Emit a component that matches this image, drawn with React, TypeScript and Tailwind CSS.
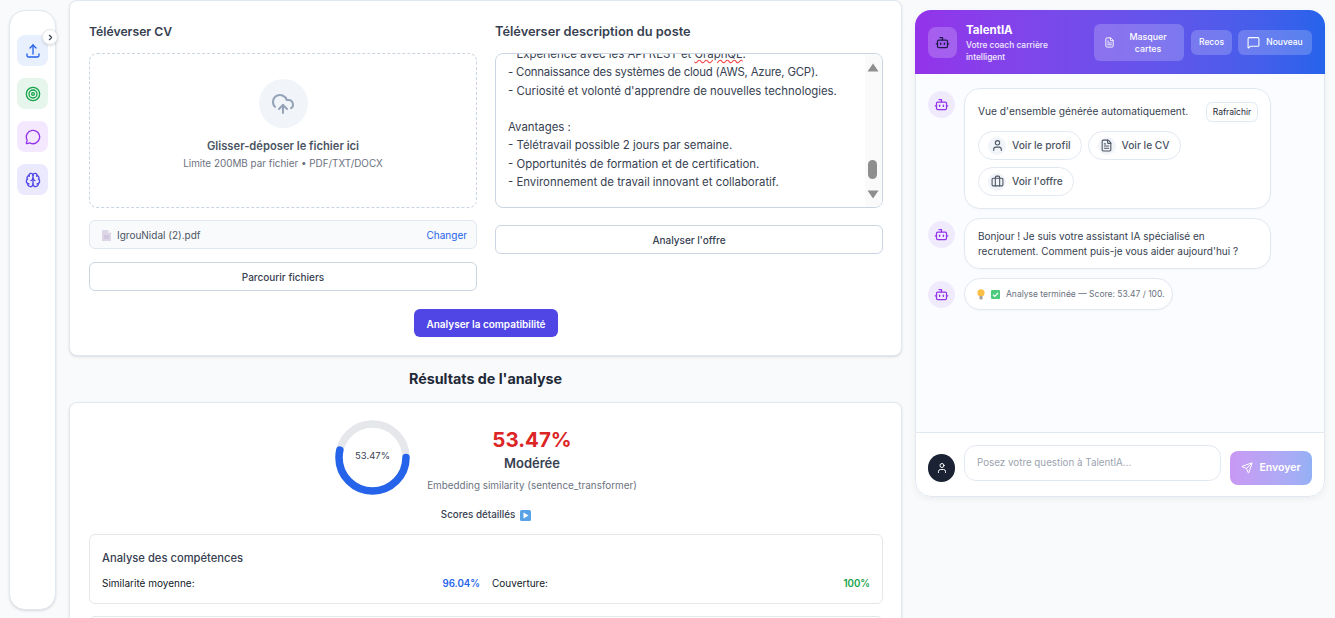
import React from 'react';
import {
    Bot,
    Brain,
    Briefcase,
    ChevronRight,
    CloudUpload,
    FileText,
    MessageCircle,
    MessageSquare,
    Send,
    Target,
    User,
} from 'lucide-react';

function UploadTray() {
    return (
        <svg width="16" height="16" viewBox="0 0 24 24" fill="none" stroke="currentColor" strokeWidth="2" strokeLinecap="round" strokeLinejoin="round">
            <path d="M3 16.5v2.25A2.25 2.25 0 0 0 5.25 21h13.5A2.25 2.25 0 0 0 21 18.75V16.5" />
            <path d="M7.5 7.5 12 3l4.5 4.5" />
            <path d="M12 3v13.5" />
        </svg>
    );
}

function PdfGlyph() {
    return (
        <svg width="9" height="11" viewBox="0 0 9 11">
            <path d="M0 0h6l3 3v8H0z" fill="#dcd6e6" />
            <path d="M6 0l3 3H6z" fill="#f1eef6" />
            <path d="M2 6h5M2 8h5" stroke="#c3bad2" strokeWidth="1" />
        </svg>
    );
}

function Bulb() {
    return (
        <svg width="8" height="11" viewBox="0 0 8 11">
            <circle cx="4" cy="3.8" r="3.6" fill="#fbbf47" />
            <rect x="2.4" y="7" width="3.2" height="3.4" rx="0.8" fill="#a8a29e" />
        </svg>
    );
}

function CheckBox() {
    return (
        <svg width="9" height="9" viewBox="0 0 9 9">
            <rect width="9" height="9" rx="1" fill="#4ccb7c" />
            <path d="M2 4.6l1.8 1.8L7 3" fill="none" stroke="#fff" strokeWidth="1.2" />
        </svg>
    );
}

function PlayBox() {
    return (
        <svg width="11" height="11" viewBox="0 0 11 11">
            <rect width="11" height="11" rx="1.5" fill="#5aa2e6" />
            <path d="M3.5 2.5v6l5-3z" fill="#fff" />
        </svg>
    );
}

function BotAvatar() {
    return (
        <div className="w-[27px] h-[27px] rounded-full bg-[#f0eafd] flex items-center justify-center shrink-0 text-[#9333ea]">
            <Bot size={15} />
        </div>
    );
}

function Chip({ icon, label }: { icon: React.ReactNode; label: string }) {
    return (
        <div className="h-[29px] flex items-center gap-[6px] pl-[9px] pr-[10px] rounded-full border border-[#e2e8f0] bg-white text-[10.2px] font-medium text-[#4b5563]">
            <span className="w-[18px] h-[18px] rounded-full bg-[#f1f5f9] flex items-center justify-center">{icon}</span>
            {label}
        </div>
    );
}

function Sidebar() {
    return (
        <aside className="relative w-[47px] h-[600px] mt-[10px] ml-[9px] shrink-0 bg-white border border-[#e2e8f0] rounded-2xl shadow-sm flex flex-col items-center gap-3 pt-[24px]">
            <div className="absolute right-[-3px] top-[18px] w-4 h-4 bg-white rounded-full border border-[#e5e7eb] shadow-sm flex items-center justify-center text-[#374151]">
                <ChevronRight size={9} strokeWidth={3} />
            </div>
            <div className="w-[31px] h-[31px] rounded-lg bg-[#e8effd] text-[#2563eb] flex items-center justify-center"><UploadTray /></div>
            <div className="w-[31px] h-[31px] rounded-lg bg-[#e6f6ec] text-[#16a34a] flex items-center justify-center"><Target size={16} /></div>
            <div className="w-[31px] h-[31px] rounded-lg bg-[#f3e8fd] text-[#9333ea] flex items-center justify-center"><MessageCircle size={16} /></div>
            <div className="w-[31px] h-[31px] rounded-lg bg-[#ebe9fd] text-[#4f46e5] flex items-center justify-center"><Brain size={16} /></div>
        </aside>
    );
}

function UploadCard() {
    return (
        <section className="h-[356px] bg-white border border-[#e2e8f0] rounded-lg shadow-sm pl-[19px] pr-[18px] pt-[22px]">
            <div className="flex gap-[18px]">
                {/* Colonne CV */}
                <div className="w-[388px]">
                    <h3 className="h-[18px] leading-[18px] text-[12.2px] font-semibold text-[#374151] mb-[12px]">Téléverser CV</h3>
                    <div className="h-[155px] border border-dashed border-[#cbd5e1] rounded-lg flex flex-col items-center pt-[25px]">
                        <div className="w-[49px] h-[49px] rounded-full bg-[#f1f5f9] flex items-center justify-center text-[#94a3b8]">
                            <CloudUpload size={24} />
                        </div>
                        <p className="mt-[10px] h-[16px] leading-[16px] text-[11.2px] font-semibold text-[#4b5563]">Glisser-déposer le fichier ici</p>
                        <p className="mt-[1px] h-[16px] leading-[16px] text-[9.9px] text-[#6b7280]">Limite 200MB par fichier • PDF/TXT/DOCX</p>
                    </div>
                    <div className="mt-[12px] h-[29px] bg-[#f8fafc] border border-[#e2e8f0] rounded-md flex items-center justify-between pl-[12px] pr-[9px] pt-[1px]">
                        <span className="flex items-center gap-[6px] text-[10px] text-[#4b5563]"><PdfGlyph />IgrouNidal (2).pdf</span>
                        <span className="text-[10px] text-[#2563eb]">Changer</span>
                    </div>
                    <button className="mt-[13px] w-full h-[29px] pt-[1px] bg-white border border-[#cbd5e1] rounded-md text-[10px] font-medium text-[#374151]">Parcourir fichiers</button>
                </div>

                {/* Colonne description */}
                <div className="w-[388px]">
                    <h3 className="h-[18px] leading-[18px] text-[12.8px] font-semibold text-[#374151] mb-[12px]">Téléverser description du poste</h3>
                    <div className="relative h-[155px] border border-[#cbd5e1] rounded-lg overflow-hidden pl-[12px] text-[11.4px] leading-[18.3px] text-[#374151]">
                        <div className="mt-[-9px]">
                            <p>- Expérience avec les API REST et <span className="underline decoration-wavy decoration-[#ef4444]">GraphQL</span>.</p>
                            <p className="tracking-[-0.2px]">- Connaissance des systèmes de cloud (AWS, Azure, GCP).</p>
                            <p>- Curiosité et volonté d'apprendre de nouvelles technologies.</p>
                            <p className="h-[18.3px]" />
                            <p>Avantages :</p>
                            <p>- Télétravail possible 2 jours par semaine.</p>
                            <p>- Opportunités de formation et de certification.</p>
                            <p>- Environnement de travail innovant et collaboratif.</p>
                        </div>
                        {/* Barre de défilement */}
                        <div className="absolute right-0 top-0 bottom-0 w-[17px] bg-[#fafafa]">
                            <svg className="absolute left-[2px] top-[9px]" width="12" height="9" viewBox="0 0 12 9"><path d="M6 0.5l5.5 8H0.5z" fill="#8e8e8e" /></svg>
                            <div className="absolute left-[3px] top-[106px] w-[9px] h-[19px] rounded-full bg-[#8e8e8e]" />
                            <svg className="absolute left-[2px] top-[136px]" width="12" height="9" viewBox="0 0 12 9"><path d="M0.5 0.5h11L6 8.5z" fill="#8e8e8e" /></svg>
                        </div>
                    </div>
                    <button className="mt-[17px] w-full h-[29px] pt-[1px] bg-white border border-[#cbd5e1] rounded-md text-[10px] font-medium text-[#374151]">Analyser l'offre</button>
                </div>
            </div>
            <div className="flex justify-center mt-[18px]">
                <button className="w-[144px] h-[28px] pt-[2px] bg-[#4f46e5] rounded-md text-[10px] font-semibold text-white">Analyser la compatibilité</button>
            </div>
        </section>
    );
}

function ScoreRing() {
    const r = 33.5;
    const c = 2 * Math.PI * r;
    return (
        <div className="relative w-[75px] h-[75px]">
            <svg width="75" height="75" viewBox="0 0 75 75">
                <circle cx="37.5" cy="37.5" r={r} fill="none" stroke="#e5e7eb" strokeWidth="7.5" />
                <circle cx="37.5" cy="37.5" r={r} fill="none" stroke="#2563eb" strokeWidth="7.5" strokeLinecap="round" strokeDasharray={`${c * 0.5347} ${c}`} />
            </svg>
            <div className="absolute inset-0 flex items-center justify-center pb-[2px] text-[9.5px] text-[#374151]">53.47%</div>
        </div>
    );
}

function ResultsCard() {
    return (
        <section className="bg-white border border-[#e2e8f0] rounded-lg shadow-sm pl-[19px] pr-[18px] pt-[17px] h-[260px]">
            <div className="flex justify-center gap-[16px] pl-[1px]">
                <ScoreRing />
                <div className="w-[212px] flex flex-col items-center">
                    <p className="h-[28px] mt-[6px] leading-[28px] text-[20.5px] font-bold text-[#dc2626]">53.47%</p>
                    <p className="h-[18px] leading-[18px] text-[13px] font-semibold text-[#374151]">Modérée</p>
                    <p className="h-[14px] mt-[6px] leading-[14px] text-[9.9px] text-[#6b7280]">Embedding similarity (sentence_transformer)</p>
                </div>
            </div>
            <div className="h-[14px] mt-[13px] flex items-center justify-center gap-[5px] text-[9.8px] font-medium text-[#374151]">
                Scores détaillés <PlayBox />
            </div>
            <div className="mt-[12px] h-[70px] border border-[#e5e7eb] rounded-md px-[12px] pt-[16px]">
                <h4 className="h-[14px] leading-[14px] text-[11.2px] font-medium text-[#374151]">Analyse des compétences</h4>
                <div className="mt-[11px] flex gap-[12px] text-[10px] leading-[14px] text-[#111827]">
                    <div className="flex-1 flex justify-between items-baseline">
                        <span>Similarité moyenne:</span>
                        <span className="font-semibold text-[#2563eb] text-[9.7px]">96.04%</span>
                    </div>
                    <div className="flex-1 flex justify-between items-baseline">
                        <span>Couverture:</span>
                        <span className="font-semibold text-[#16a34a] text-[9.7px]">100%</span>
                    </div>
                </div>
            </div>
            <div className="mt-[12px] h-[70px] border border-[#e5e7eb] rounded-md" />
        </section>
    );
}

function ChatHeader() {
    return (
        <header className="h-[64px] shrink-0 bg-gradient-to-r from-[#9333ea] to-[#2563eb] flex items-center pl-[13px] pr-[13px]">
            <div className="w-[29px] h-[31px] rounded-lg bg-white/20 flex items-center justify-center text-[#1e1b4b] shrink-0">
                <Bot size={15} />
            </div>
            <div className="ml-[9px] w-[128px] text-white">
                <p className="text-[11.5px] leading-[14px] font-bold mb-[2px] pt-[1px]">TalentIA</p>
                <p className="w-[100px] text-[8.4px] leading-[12px] font-medium text-white/90">Votre coach carrière intelligent</p>
            </div>
            <button className="w-[90px] h-[37px] pt-[1px] rounded-md bg-white/20 flex items-center pl-[10px] text-white">
                <FileText size={11} className="shrink-0" />
                <span className="flex-1 text-center text-[8.8px] leading-[12px] font-medium pr-[3px]">Masquer<br />cartes</span>
            </button>
            <button className="ml-[7px] w-[41px] h-[25px] pt-[1px] rounded-md bg-white/20 text-[8.5px] font-medium text-white">Recos</button>
            <button className="ml-[6px] w-[74px] h-[25px] pt-[1px] rounded-md bg-white/20 flex items-center justify-center gap-[6px] text-[8.5px] font-medium text-white">
                <MessageSquare size={13} />Nouveau
            </button>
        </header>
    );
}

function ChatMessages() {
    return (
        <div className="flex-1 bg-[#fbfcff] border-x border-[#e2e8f0] pl-[12px] pt-[14px] flex flex-col gap-[9px]">
            <div className="flex gap-[9px]">
                <div className="pt-[3px]"><BotAvatar /></div>
                <div className="w-[307px] h-[121px] bg-white border border-[#e2e8f0] rounded-2xl shadow-[0_1px_2px_rgba(0,0,0,0.03)] pl-[13px] pr-[12px] pt-[13px]">
                    <div className="flex items-center justify-between h-[20px]">
                        <span className="text-[10.2px] text-[#374151]">Vue d'ensemble générée automatiquement.</span>
                        <span className="w-[52px] h-[20px] border border-[#e2e8f0] rounded-md flex items-center justify-center text-[8.5px] text-[#1f2937]">Rafraîchir</span>
                    </div>
                    <div className="mt-[9px] flex flex-wrap gap-x-[6px] gap-y-[7px]">
                        <Chip icon={<User size={13} />} label="Voir le profil" />
                        <Chip icon={<FileText size={13} />} label="Voir le CV" />
                        <Chip icon={<Briefcase size={13} />} label="Voir l'offre" />
                    </div>
                </div>
            </div>
            <div className="flex gap-[9px]">
                <div className="pt-[3px]"><BotAvatar /></div>
                <div className="w-[307px] h-[51px] bg-white border border-[#e2e8f0] rounded-2xl shadow-[0_1px_2px_rgba(0,0,0,0.03)] pl-[13px] pt-[10px] text-[10px] leading-[15px] text-[#374151]">
                    Bonjour ! Je suis votre assistant IA spécialisé en<br />recrutement. Comment puis-je vous aider aujourd'hui ?
                </div>
            </div>
            <div className="flex gap-[9px]">
                <div className="pt-[3px]"><BotAvatar /></div>
                <div className="w-[209px] h-[32px] pt-[1px] bg-white border border-[#e2e8f0] rounded-2xl shadow-[0_1px_2px_rgba(0,0,0,0.03)] pl-[12px] flex items-center gap-[6px] text-[8.5px] text-[#6b7280]">
                    <Bulb /><CheckBox /><span>Analyse terminée — Score: 53.47 / 100.</span>
                </div>
            </div>
        </div>
    );
}

function ChatFooter() {
    return (
        <footer className="h-[65px] shrink-0 border border-[#e2e8f0] rounded-b-2xl bg-white flex pl-[12px] pr-[12px]">
            <div className="mt-[21px] w-[27px] h-[28px] rounded-full bg-[#1a2233] flex items-center justify-center text-white shrink-0">
                <User size={12} />
            </div>
            <div className="ml-[9px] mt-[12px] w-[257px] h-[36px] border border-[#e2e8f0] rounded-xl flex items-center pl-[12px] text-[9.8px] text-[#9ca3af]">
                Posez votre question à TalentIA...
            </div>
            <button className="ml-[9px] mt-[18px] w-[82px] h-[34px] rounded-lg bg-gradient-to-r from-[#9333ea] to-[#2563eb] opacity-50 flex items-center justify-center gap-[6px] text-[10.5px] font-semibold text-white">
                <Send size={12} />Envoyer
            </button>
        </footer>
    );
}

export default function App() {
    return (
        <div className="w-[1335px] h-[618px] overflow-hidden bg-[#f8fafc] flex font-['Inter',sans-serif]">
            <Sidebar />
            <main className="w-[833px] ml-[13px] shrink-0">
                <UploadCard />
                <h2 className="h-[46px] leading-[46px] text-center text-[14.3px] font-bold text-[#1f2937]">Résultats de l'analyse</h2>
                <ResultsCard />
            </main>
            <section className="w-[410px] h-[487px] ml-[13px] mt-[10px] shrink-0 bg-white rounded-2xl shadow-[0_2px_6px_rgba(15,23,42,0.06)] overflow-hidden flex flex-col">
                <ChatHeader />
                <ChatMessages />
                <ChatFooter />
            </section>
        </div>
    );
}
